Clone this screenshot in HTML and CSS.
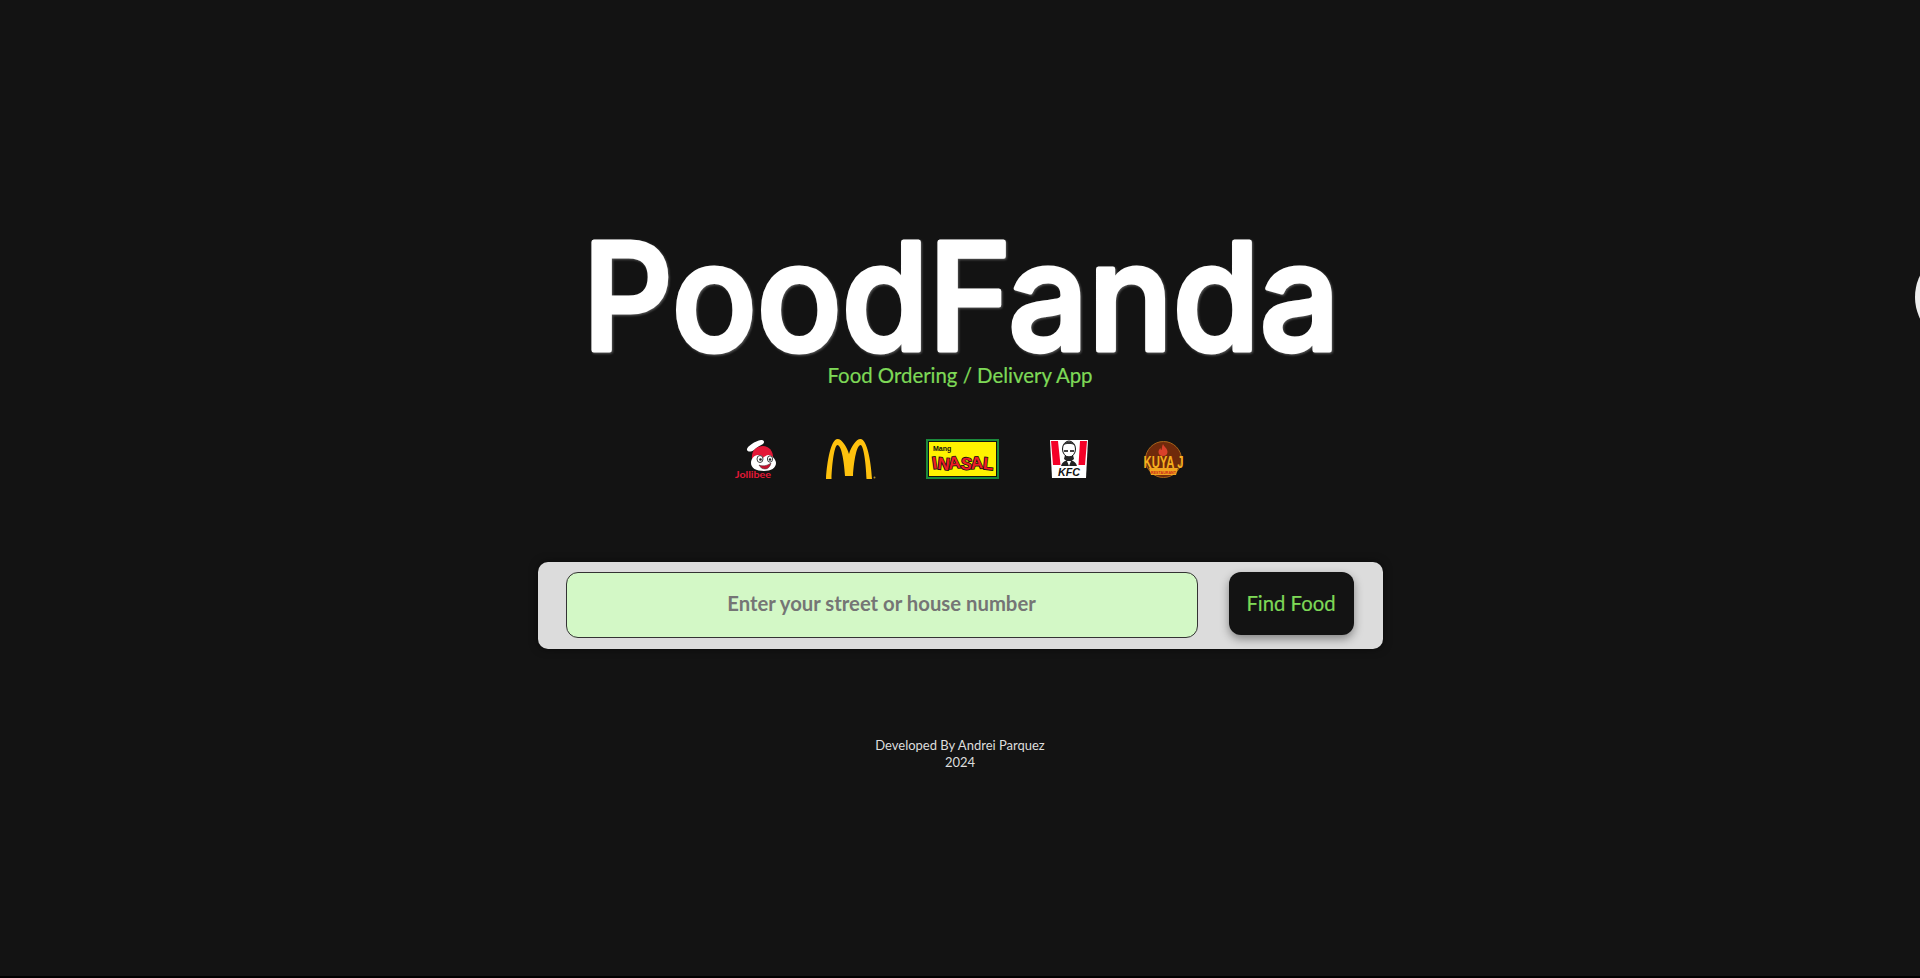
FILE: index.html

```html
<!DOCTYPE html>
<html lang="en">
<head>
  <meta charset="UTF-8" />
  <meta name="viewport" content="width=device-width, initial-scale=1.0" />
  <title>PoodFanda</title>
  <link rel="stylesheet" href="styles.css">
</head>
<body>

<div class="blob"></div>

<main class="landing">
  <h1 class="brand">
    <svg class="brand-svg" width="770" height="150" viewBox="0 0 770 150">
      <text class="brand-text" x="386" y="137.500" text-anchor="middle" textLength="757" lengthAdjust="spacingAndGlyphs">PoodFanda</text>
    </svg>
  </h1>
  <p class="tagline">Food Ordering / Delivery App</p>

  <div class="logos">
    <!-- Jollibee -->
    <svg class="logo" width="40" height="40" viewBox="0 0 40 40">
      <path d="M12 11c-1-3 8-9 14-10 3 0 4 2 2 4-2 1-6 3-9 6-3 2-6 2-7 0z" fill="#fff"/>
      <path d="M17 20c-1-9 5-13 11-13 6 0 10 5 10 11l-3 5H19z" fill="#e31837"/>
      <path d="M16 24c0-4 3-8 7-8 3 0 4 2 5 3 1-1 3-3 6-3 4 1 7 5 7 8 0 5-5 8-12 8-8 0-13-3-13-8z" fill="#fff"/>
      <ellipse cx="25" cy="20" rx="3" ry="3.500" fill="#fff" stroke="#444" stroke-width="1"/>
      <ellipse cx="35" cy="20" rx="2.600" ry="3.200" fill="#fff" stroke="#444" stroke-width="1"/>
      <circle cx="25.500" cy="20.500" r="1.300" fill="#222"/>
      <circle cx="35" cy="20.500" r="1.200" fill="#222"/>
      <path d="M24 26c3 1.500 8 1 12-2-1 4-3 6-6 6-3 0-5-2-6-4z" fill="#c8102e" stroke="#333" stroke-width=".5"/>
      <text class="jolly-name" x="0" y="39" textLength="36" lengthAdjust="spacingAndGlyphs">Jollibee</text>
    </svg>

    <!-- McDonald's -->
    <svg class="logo" width="50" height="40" viewBox="-1 0 50 40">
      <path fill="#ffc20e" d="M0 40C1 22 5 0 11.500 0 16 0 21 8 23 15 25 8 30 0 34.500 0 41 0 45 22 46 40H40.500C40 24 37.500 6 34.500 6 31 6 28 20 27 37H19C18 20 15 6 11.500 6 8.500 6 6 24 5.500 40Z"/>
      <circle cx="48.500" cy="38.500" r="1" fill="#a8862a"/>
    </svg>

    <!-- Mang Inasal -->
    <svg class="logo" width="74" height="40" viewBox="-1 0 74 40">
      <rect x="1" y="1" width="71" height="38" fill="#fff200" stroke="#1b8a3c" stroke-width="2"/>
      <rect x="2.500" y="2.500" width="68" height="35" fill="none" stroke="#111" stroke-width="1"/>
      <text class="mang-small" x="7" y="11.500">Mang</text>
      <text class="mang-big" x="7" y="30" rotate="-8 6 -6 5 -4 6" textLength="60" lengthAdjust="spacing">INASAL</text>
    </svg>

    <!-- KFC -->
    <svg class="logo" width="40" height="40" viewBox="0 0 40 40">
      <path d="M1 1h38l-2 38H3z" fill="#fff"/>
      <path d="M2 2h7l2.500 24H4zM31 2h7l-2 24h-6.500z" fill="#f40027"/>
      <ellipse cx="20" cy="10" rx="6.500" ry="8" fill="#fff" stroke="#111" stroke-width="1"/>
      <path d="M14 7c1-6 11-6 12 0-2-2-3-2-6-2s-4 0-6 2z" fill="#333"/>
      <path d="M15 11h4v2h-4zM21 11h4v2h-4z" fill="#444"/>
      <path d="M16 16c2 2 6 2 8 0l1 4-5 4-5-4z" fill="#222"/>
      <path d="M12 27c1-4 4-6 8-5 4-1 7 1 8 5z" fill="#222"/>
      <path d="M18 22h4l-2 5z" fill="#fff"/>
      <text class="kfc-name" x="20" y="36.500" text-anchor="middle" textLength="22" lengthAdjust="spacingAndGlyphs">KFC</text>
    </svg>

    <!-- Kuya J -->
    <svg class="logo" width="46" height="40" viewBox="0 0 46 40">
      <circle cx="24.500" cy="20.500" r="18" fill="#6f2a0b" stroke="#a5641a" stroke-width="1"/>
      <path d="M24 5c1 3 4.500 4 4.500 8 0 2.500-2 4-4.500 4s-4.500-1.500-4.500-4c0-2 1-3 2-4 0 1 .5 2 1 2 .5-2 .5-4 1.500-6z" fill="#d9402a"/>
      <text class="kuya-name" x="24.500" y="29" text-anchor="middle" textLength="40" lengthAdjust="spacingAndGlyphs">KUYA J</text>
      <path d="M10 29h29l-2 7H12z" fill="#f1a51f"/>
      <text class="kuya-sub" x="24.500" y="34.500" text-anchor="middle" textLength="25" lengthAdjust="spacingAndGlyphs">RESTAURANT</text>
    </svg>
  </div>

  <form class="search-bar">
    <input class="search-input" type="text" placeholder="Enter your street or house number">
    <button class="find-btn" type="button">Find Food</button>
  </form>

  <footer class="credits">
    <div>Developed By Andrei Parquez</div>
    <div>2024</div>
  </footer>
</main>

</body>
</html>
```

FILE: styles.css

```css
html { background: #000; }
body { margin: 0; height: 976px; background: #131313; font-family: "Lato", "Open Sans", sans-serif; overflow: hidden; position: relative; }

.blob { position: absolute; left: 1915px; top: 248px; width: 98px; height: 98px; border-radius: 50%; background: #eee; }

.landing { display: flex; flex-direction: column; align-items: center; padding-top: 212px; }

.brand { margin: 0; font-size: inherit; }
.brand-svg { display: block; overflow: visible; }
.brand-text { font: 500 148px "Inter", sans-serif; fill: #fff; stroke: #fff; stroke-width: 5px; stroke-linejoin: round; stroke-linecap: round; filter: drop-shadow(1px 1px 1px rgba(255,255,255,0.3)); }
.tagline { margin: 1px 0 0; font-size: 20.4px; line-height: 24px; color: #7ed957; -webkit-text-stroke: 0.2px #7ed957; }

.logos { display: flex; gap: 50px; margin-top: 52px; }
.logo { display: block; overflow: visible; }
.jolly-name { font: 700 10px "Lato", sans-serif; fill: #e31837; }
.mang-small { font: 700 7px "Liberation Sans", sans-serif; fill: #111; }
.mang-big { font: 700 17px "Liberation Sans", sans-serif; fill: #ee1c25; stroke: #111; stroke-width: 1.600px; paint-order: stroke; }
.kfc-name { font: italic 700 10px "Liberation Sans", sans-serif; fill: #111; }
.kuya-name { font: 700 16px "Liberation Sans", sans-serif; fill: #f6b01e; }
.kuya-sub { font: 700 4px "Liberation Sans", sans-serif; fill: #c9281a; }

.search-bar { display: flex; align-items: flex-start; gap: 31px; width: 845px; height: 87px; box-sizing: border-box; margin-top: 83px; padding: 10px 29px 0 28px; background: #dcdcdc; border-radius: 10px; box-shadow: 0 0 8px rgba(0,0,0,0.5); }
.search-input { width: 632px; height: 66px; box-sizing: border-box; padding: 0 0 5px; border: 1px solid #333; border-radius: 12px; background: #d3f8c6; font-family: inherit; font-size: 20.3px; font-weight: 700; text-align: center; outline: none; }
.search-input::placeholder { color: #757575; opacity: 1; }
.find-btn { width: 125px; height: 63px; padding: 0 0 1px; border: none; border-radius: 12px; background: #131313; color: #7ed957; font-family: inherit; font-size: 20.3px; -webkit-text-stroke: 0.2px #7ed957; cursor: pointer; box-shadow: 0 4px 10px rgba(0,0,0,0.4); }

.credits { margin-top: 88px; font-size: 13px; line-height: 17px; color: #ddd; text-align: center; }
```
